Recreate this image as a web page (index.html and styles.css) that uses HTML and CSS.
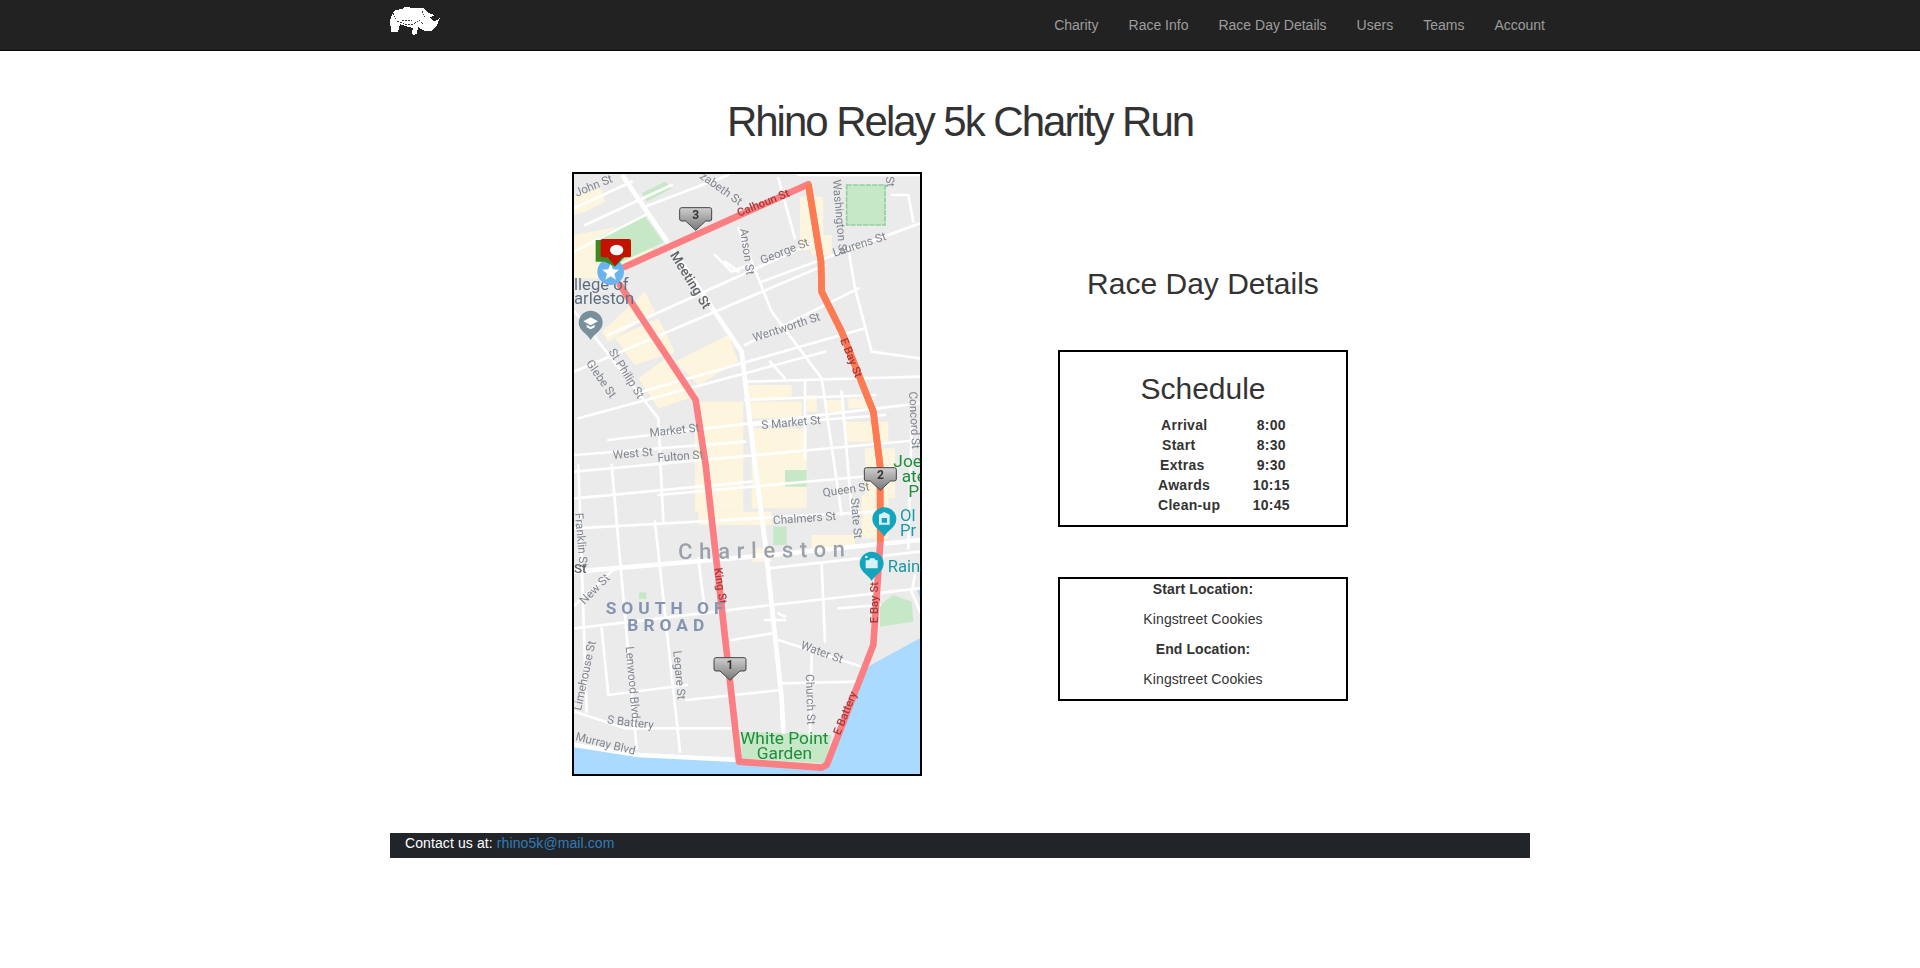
FILE: index.html
```html
<!DOCTYPE html>
<html lang="en">
<head>
<meta charset="UTF-8">
<meta name="viewport" content="width=device-width, initial-scale=1.0">
<title>Race Day Details</title>
<link rel="stylesheet" href="styles.css">
</head>
<body>
    <nav class="navbar">
        <div class="nav-inner">
            <a href="#" class="brand">
                <svg class="rhino" viewBox="0 0 50 30" width="50" height="30">
                    <path fill="#fff" d="M0 14 L2 8 L5 3 L12 2 L15 0 L24 1 L33 1 L36 3 L38 6 L42 7 L44 9 L39 10 L42 13 L44 14 L47 13 L50 11 L47 18 L44 22 L41 24 L35 24 L31 22 L28 20 L27 27 L23 28 L22 25 L23 21 L15 19 L10 17 L9 21 L8 25 L1 25 L1 20 L0 17 Z"/>
                    <path fill="none" stroke="#222" stroke-width="0.9" stroke-dasharray="2 1" d="M7 14 L14 17 L24 17 L29 13 L33 17 M3 6 L6 12 M32 4 L35 10 M12 13 L22 14"/>
                </svg>
            </a>
            <ul class="nav-links">
                <li><a href="#">Charity</a></li>
                <li><a href="#">Race Info</a></li>
                <li><a href="#">Race Day Details</a></li>
                <li><a href="#">Users</a></li>
                <li><a href="#">Teams</a></li>
                <li><a href="#">Account</a></li>
            </ul>
        </div>
    </nav>

    <div class="container">
        <h1>Rhino Relay 5k Charity Run</h1>

        <div class="race-row">
            <div class="map-frame">
                <svg class="map" viewBox="27 27 1038 1800" width="346" height="600">
                    <defs>
                        <linearGradient id="calloutFill" x1="0" y1="0" x2="0" y2="1">
                            <stop offset="0" stop-color="#cfcfcf"/>
                            <stop offset="1" stop-color="#777"/>
                        </linearGradient>
                        <path id="callout" d="M-48 -30 Q-48 -36 -42 -36 L42 -36 Q48 -36 48 -30 L48 -2 Q48 4 42 4 L30 4 L0 32 L-30 4 L-42 4 Q-48 4 -48 -2 Z" fill="url(#calloutFill)" stroke="#444" stroke-width="3"/>
                        <path id="pin" d="M0 50 C-8 32 -36 22 -36 -2 A36 36 0 1 1 36 -2 C36 22 8 32 0 50 Z"/>
                    </defs>

                    <rect x="27" y="27" width="1038" height="1800" fill="#ebebeb"/>

                    <!-- built up blocks -->
                    <g fill="#fdf5de">
                        <polygon points="27,90 110,70 120,110 60,140 27,150"/>
                        <polygon points="27,210 240,170 270,280 180,310 100,340 27,340"/>
                        <polygon points="110,500 240,380 270,440 130,530"/>
                        <polygon points="150,520 280,460 330,560 220,640 280,730 400,690 300,570 210,600"/>
                        <polygon points="330,590 490,510 520,590 400,660"/>
                        <rect x="705" y="95" width="70" height="160"/>
                        <rect x="740" y="210" width="60" height="60"/>
                        <rect x="550" y="660" width="130" height="40"/>
                        <rect x="555" y="710" width="155" height="50"/>
                        <rect x="390" y="710" width="145" height="330"/>
                        <rect x="560" y="790" width="165" height="240"/>
                        <rect x="725" y="690" width="30" height="50"/>
                        <rect x="780" y="705" width="55" height="35"/>
                        <rect x="850" y="700" width="75" height="30"/>
                        <rect x="840" y="770" width="130" height="60"/>
                        <rect x="900" y="850" width="90" height="150"/>
                        <rect x="400" y="1040" width="220" height="40"/>
                        <rect x="740" y="1110" width="130" height="40"/>
                        <rect x="560" y="1150" width="60" height="40"/>
                        <rect x="890" y="990" width="80" height="130"/>
                    </g>

                    <!-- parks -->
                    <g fill="#c6e8c6">
                        <polygon points="230,85 300,50 320,70 245,110"/>
                        <polygon points="90,222 235,147 295,232 150,300"/>
                        <rect x="845" y="60" width="115" height="120" stroke="#8ed2a0" stroke-width="5" stroke-dasharray="16 3"/>
                        <rect x="660" y="915" width="65" height="50"/>
                        <rect x="625" y="1085" width="40" height="55"/>
                        <polygon points="945,1320 985,1290 1040,1310 1045,1370 945,1385"/>
                        <polygon points="530,1700 800,1710 780,1795 530,1780"/>
                        <rect x="222" y="1282" width="22" height="20"/>
                    </g>

                    <!-- water -->
                    <path fill="#aadaff" d="M27 1740 L220 1770 L520 1790 L780 1815 L900 1510 L1010 1450 L1065 1420 L1065 1827 L27 1827 Z"/>
                    <path fill="#aadaff" d="M1055 1270 L1065 1265 L1065 1300 Z"/>

                    <!-- minor streets -->
                    <g fill="none" stroke="#fff" stroke-width="8" stroke-linecap="round" stroke-linejoin="round">
                        <path d="M27 130 L200 50"/>
                        <path d="M60 180 L320 60"/>
                        <path d="M240 125 L490 30"/>
                        <path d="M27 260 L240 150"/>
                        <path d="M130 510 L740 235"/>
                        <path d="M590 350 L1065 175"/>
                        <path d="M540 540 L880 370"/>
                        <path d="M230 680 L900 490"/>
                        <path d="M27 620 L780 300"/>
                        <path d="M40 760 L780 560"/>
                        <path d="M540 650 L1065 635"/>
                        <path d="M540 705 L930 690"/>
                        <path d="M130 825 L1065 715"/>
                        <path d="M30 870 L540 830"/>
                        <path d="M560 780 L960 750"/>
                        <path d="M30 1000 L560 950"/>
                        <path d="M27 920 L1065 825"/>
                        <path d="M280 990 L950 930"/>
                        <path d="M30 1090 L940 1040"/>
                        <path d="M30 1390 L620 1320 L1065 1270"/>
                        <path d="M500 1425 L620 1405"/>
                        <path d="M640 1425 L890 1505"/>
                        <path d="M365 1605 L650 1575"/>
                        <path d="M130 1590 L365 1560"/>
                        <path d="M650 1555 L880 1550"/>
                        <path d="M30 1640 L180 1690 L520 1690"/>
                        <path d="M610 1210 L1065 1160"/>
                        <path d="M520 190 L620 440 L770 640 L830 1050"/>
                        <path d="M640 40 L690 220"/>
                        <path d="M850 250 L870 370 L920 560 L1065 580"/>
                        <path d="M980 90 L1030 90 L1045 170"/>
                        <path d="M450 270 L500 320 L550 300 M480 290 L520 320"/>
                        <path d="M30 440 L280 760 L295 1070"/>
                        <path d="M140 900 L215 1750"/>
                        <path d="M270 1070 L345 1760"/>
                        <path d="M400 1180 L420 1340"/>
                        <path d="M770 1200 L780 1430"/>
                        <path d="M740 1470 L735 1720"/>
                        <path d="M40 900 L65 1640"/>
                        <path d="M110 1390 L130 1590"/>
                        <path d="M615 590 L660 640"/>
                        <path d="M720 650 L720 880"/>
                        <path d="M830 680 L860 1040"/>
                        <path d="M1040 780 L1030 1150"/>
                        <path d="M30 1320 L150 1210"/>
                        <path d="M600 1365 L660 1365 M640 1345 L660 1355"/>
                        <path d="M820 1330 L945 1320"/>
                        <path d="M1050 1230 L1040 1280 L1065 1340"/>
                    </g>

                    <!-- main streets -->
                    <g fill="none" stroke="#fff" stroke-width="14" stroke-linecap="round" stroke-linejoin="round">
                        <path d="M175 35 L530 560 L570 900 L600 1130 L650 1600 L655 1700"/>
                        <path d="M30 1220 L620 1170 L1065 1125"/>
                        <path d="M27 1740 L220 1770 L520 1785"/>
                        <path d="M700 30 L1065 30" stroke-width="8"/>
                    </g>

                    <!-- route -->
                    <path fill="none" stroke="#fb7f82" stroke-width="20" stroke-linejoin="round" stroke-linecap="round" d="M180 305 L730 58 L768 290 L770 380 L830 500 L925 740 L945 900 L946 1130 L925 1440 L785 1800 L770 1808 L522 1790 L422 900 L392 705 L300 565 L165 360"/>
                    <path fill="none" stroke="#fd7b50" stroke-width="20" stroke-linejoin="round" d="M730 58 L768 290 L770 380 L830 500 L925 740 L945 900 L946 1130"/>

                    <!-- street names -->
                    <g class="street">
                        <text transform="translate(35 95) rotate(-22)">John St</text>
                        <text transform="translate(402 38) rotate(35)">zabeth St</text>
                        <text transform="translate(525 192) rotate(82)">Anson St</text>
                        <text transform="translate(803 45) rotate(85)">Washington St</text>
                        <text transform="translate(962 35) rotate(85)">St</text>
                        <text transform="translate(592 298) rotate(-22)">George St</text>
                        <text transform="translate(808 275) rotate(-18)">Laurens St</text>
                        <text transform="translate(568 530) rotate(-18)">Wentworth St</text>
                        <text transform="translate(62 595) rotate(55)">Glebe St</text>
                        <text transform="translate(130 560) rotate(58)">St Philip St</text>
                        <text transform="translate(1032 680) rotate(87)">Concord St</text>
                        <text transform="translate(255 815) rotate(-6)">Market St</text>
                        <text transform="translate(590 792) rotate(-5)">S Market St</text>
                        <text transform="translate(145 882) rotate(-5)">West St</text>
                        <text transform="translate(278 890) rotate(-4)">Fulton St</text>
                        <text transform="translate(775 995) rotate(-8)">Queen St</text>
                        <text transform="translate(857 1000) rotate(85)">State St</text>
                        <text transform="translate(625 1078) rotate(-4)">Chalmers St</text>
                        <text transform="translate(30 1045) rotate(85)">Franklin St</text>
                        <text transform="translate(58 1320) rotate(-45)">New St</text>
                        <text transform="translate(705 1450) rotate(20)">Water St</text>
                        <text transform="translate(722 1528) rotate(88)">Church St</text>
                        <text transform="translate(182 1445) rotate(85)">Lenwood Blvd</text>
                        <text transform="translate(325 1458) rotate(85)">Legare St</text>
                        <text transform="translate(48 1638) rotate(-78)">Limehouse St</text>
                        <text transform="translate(125 1675) rotate(7)">S Battery</text>
                        <text transform="translate(30 1725) rotate(14)">Murray Blvd</text>
                    </g>
                    <text class="street-dark" transform="translate(314 270) rotate(58)">Meeting St</text>
                    <text class="street-dark" x="27" y="1225">St</text>
                    <g class="route-label">
                        <text transform="translate(522 155) rotate(-22)">Calhoun St</text>
                        <text transform="translate(825 525) rotate(68)">E Bay St</text>
                        <text transform="translate(448 1210) rotate(82)">King St</text>
                        <text transform="translate(938 1375) rotate(-90)">E Bay St</text>
                        <text transform="translate(825 1712) rotate(-68)">E Battery</text>
                    </g>

                    <text class="place" x="27" y="375">llege of</text>
                    <text class="place" x="27" y="418">arleston</text>
                    <text class="district-city" transform="translate(340 1183) rotate(-1)">Charleston</text>
                    <text class="district" x="122" y="1348">SOUTH OF</text>
                    <text class="district" x="187" y="1398">BROAD</text>
                    <text class="park-name" x="525" y="1738">White Point</text>
                    <text class="park-name" x="575" y="1782">Garden</text>
                    <text class="park-name" x="985" y="905">Joe</text>
                    <text class="park-name" x="1010" y="950">ate</text>
                    <text class="park-name" x="1030" y="995">P</text>
                    <text class="poi-name" x="1005" y="1067">Ol</text>
                    <text class="poi-name" x="1005" y="1112">Pr</text>
                    <text class="poi-name" x="968" y="1222">Rain</text>

                    <!-- pins -->
                    <g transform="translate(77 475)">
                        <use href="#pin" fill="#78909c"/>
                        <path d="M-22 -6 L0 -18 L22 -6 L0 6 Z M-12 4 L0 11 L12 4 L12 12 L0 18 L-12 12 Z" fill="#fff"/>
                    </g>
                    <g transform="translate(958 1065)">
                        <use href="#pin" fill="#12a5bd"/>
                        <path d="M-16 -16 L0 -24 L16 -16 L16 14 L-16 14 Z M-8 -6 L-8 8 L8 8 L8 -6 Z" fill="#d9f1f5"/>
                    </g>
                    <g transform="translate(920 1198)">
                        <use href="#pin" fill="#12a5bd"/>
                        <path d="M-18 -12 L-8 -12 L-4 -18 L8 -18 L12 -12 L18 -12 L18 12 L-18 12 Z" fill="#d9f1f5"/>
                        <circle cx="-16" cy="-22" r="4" fill="#d9f1f5"/>
                    </g>

                    <!-- start marker -->
                    <circle cx="137" cy="320" r="40" fill="#6bb3ef"/>
                    <path d="M137 296 L144 313 L162 314 L148 326 L153 344 L137 334 L121 344 L126 326 L112 314 L130 313 Z" fill="#fff"/>
                    <path d="M92 225 L180 225 L180 275 L150 305 L120 290 L92 290 Z" fill="#3d8a25"/>
                    <path d="M107 228 Q107 222 113 222 L192 222 Q198 222 198 228 L198 272 Q198 277 192 277 L172 277 L150 303 L128 277 L113 277 Q107 277 107 272 Z" fill="#c41200"/>
                    <ellipse cx="155" cy="255" rx="20" ry="16" fill="#fff"/>

                    <!-- mile markers -->
                    <g transform="translate(392 164)">
                        <use href="#callout"/>
                        <text class="mile" y="-2">3</text>
                    </g>
                    <g transform="translate(946 944)">
                        <use href="#callout"/>
                        <text class="mile" y="-2">2</text>
                    </g>
                    <g transform="translate(495 1514)">
                        <use href="#callout"/>
                        <text class="mile" y="-2">1</text>
                    </g>
                </svg>
            </div>

            <div class="details">
                <h2 class="details-title">Race Day Details</h2>

                <div class="info-box">
                    <h2 class="schedule-title">Schedule</h2>
                    <table class="schedule">
                        <tr><td class="indent-3">Arrival</td><td>8:00</td></tr>
                        <tr><td class="indent-4">Start</td><td>8:30</td></tr>
                        <tr><td class="indent-2">Extras</td><td>9:30</td></tr>
                        <tr><td>Awards</td><td>10:15</td></tr>
                        <tr><td>Clean-up</td><td>10:45</td></tr>
                    </table>
                </div>

                <div class="info-box location-box">
                    <p><b>Start Location:</b></p>
                    <p>Kingstreet Cookies</p>
                    <p><b>End Location:</b></p>
                    <p>Kingstreet Cookies</p>
                </div>
            </div>
        </div>

        <footer class="contact">
            Contact us at: <a href="#">rhino5k@mail.com</a>
        </footer>
    </div>
</body>
</html>
```

FILE: styles.css
```css
/* Basic styling */
body {
    font-family: "Liberation Sans", Arial, sans-serif;
    font-size: 14px;
    line-height: 20px;
    color: #333;
    background-color: #fff;
    margin: 0;
    padding: 0;
}
a {
    text-decoration: none;
}

/* Top bar */
.navbar {
    background-color: #222;
    border-bottom: 1px solid #080808;
    height: 50px;
}
.nav-inner {
    width: 1140px;
    margin: 0 auto;
    display: flex;
    justify-content: space-between;
    align-items: center;
    height: 50px;
}
.brand {
    display: block;
    height: 30px;
    margin-top: -7px;
}
.rhino {
    display: block;
    shape-rendering: crispEdges;
}
.nav-links {
    display: flex;
    list-style: none;
    margin: 0 -30px 0 0;
    padding: 0;
}
.nav-links a {
    display: block;
    padding: 15px;
    color: #9d9d9d;
}

/* Page */
.container {
    width: 1140px;
    margin: 0 auto;
}
h1 {
    font-size: 42px;
    font-weight: 400;
    line-height: 46px;
    letter-spacing: -2px;
    text-align: center;
    margin: 48px 0 27px;
}
.race-row {
    display: flex;
    align-items: flex-start;
    padding-left: 182px;
    gap: 136px;
}

/* Map */
.map-frame {
    width: 346px;
    height: 600px;
    border: 2px solid #000;
}
.map {
    display: block;
    filter: blur(0.4px);
    font-family: Roboto, "Liberation Sans", sans-serif;
}
.street {
    font-size: 35px;
    fill: #80868f;
}
.street-dark {
    font-size: 40px;
    font-weight: 500;
    fill: #5f6368;
}
.route-label {
    font-size: 34px;
    font-weight: 500;
    fill: #a83a3c;
}
.place {
    font-size: 50px;
    fill: #5f6f80;
}
.district-city {
    font-size: 66px;
    font-weight: 500;
    letter-spacing: 20px;
    fill: #9aa1ab;
}
.district {
    font-size: 52px;
    font-weight: 700;
    letter-spacing: 15px;
    fill: #8494b0;
}
.park-name {
    font-size: 52px;
    fill: #1e8e3e;
}
.poi-name {
    font-size: 50px;
    fill: #1a9aa8;
}
.mile {
    font-size: 36px;
    font-weight: 700;
    text-anchor: middle;
    fill: #333;
}

/* Right column */
.details {
    width: 290px;
    text-align: center;
    letter-spacing: 0.1px;
}
.details-title {
    font-size: 30px;
    font-weight: 400;
    line-height: 33px;
    letter-spacing: 0;
    margin: 95px 0 0;
}
.info-box {
    border: 2px solid #000;
    margin-top: 50px;
}
.schedule-title {
    font-size: 30px;
    font-weight: 400;
    line-height: 33px;
    letter-spacing: 0;
    margin: 20px 0 10px;
}
.schedule {
    border-collapse: collapse;
    font-weight: 700;
    letter-spacing: 0.3px;
    margin: 0 0 10px 98px;
    text-align: left;
}
.schedule td {
    padding: 0;
    height: 20px;
}
.schedule td + td {
    width: 40px;
    padding-left: 31px;
    text-align: center;
}
.indent-2 {
    padding-left: 2px !important;
}
.indent-3 {
    padding-left: 3px !important;
}
.indent-4 {
    padding-left: 4px !important;
}
.location-box p {
    margin: 0 0 10px;
}

/* Footer */
.contact {
    background-color: #212529;
    color: #fff;
    height: 25px;
    margin-top: 57px;
    padding-left: 15px;
    letter-spacing: 0.1px;
}
.contact a {
    color: #337ab7;
}
```
